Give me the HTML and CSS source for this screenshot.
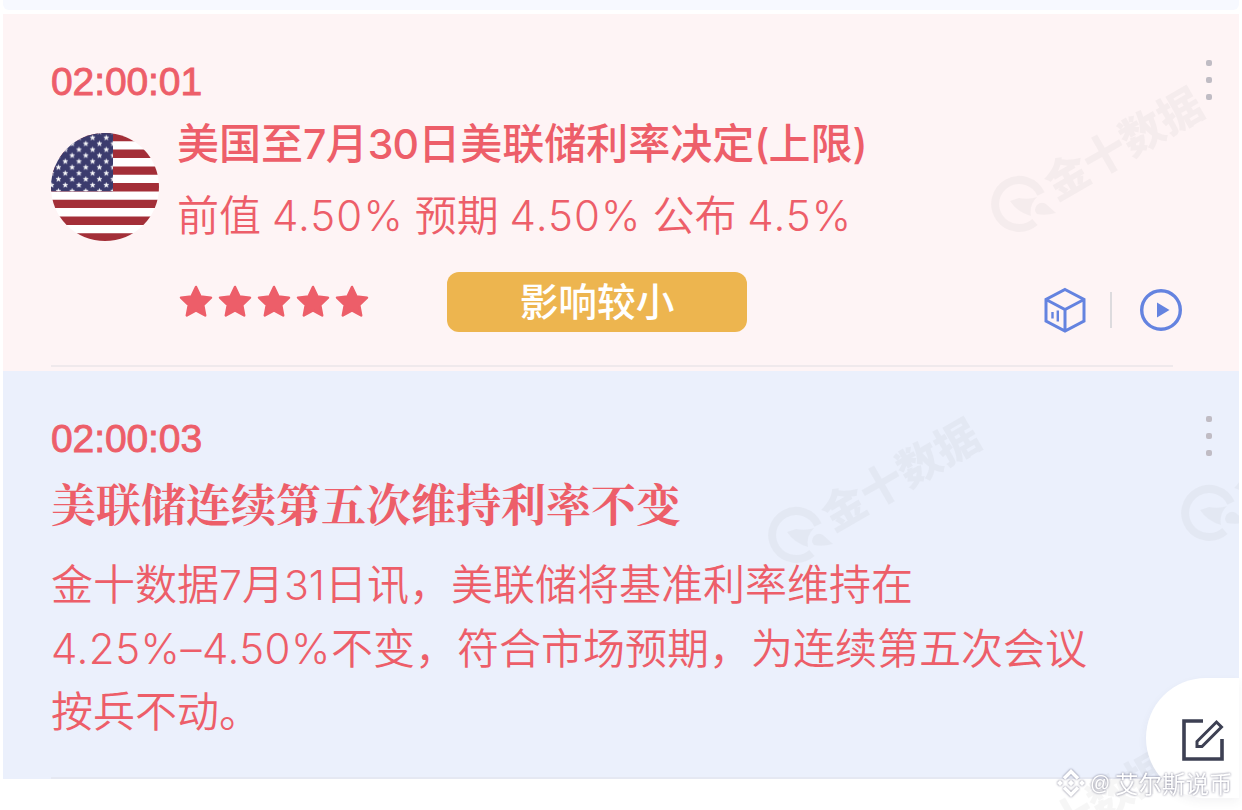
FILE: index.html
```html
<!DOCTYPE html>
<html lang="zh-CN">
<head>
    <meta charset="UTF-8">
    <meta name="viewport" content="width=device-width, initial-scale=1.0">
    <title>快讯</title>
    <link rel="stylesheet" href="styles.css">
</head>
<body>
    <!-- 公用图形 -->
    <svg class="defs" width="0" height="0">
        <defs>
            <symbol id="star" viewBox="-18 -18 36 36">
                <path d="M0-15 4.5-5.4 15-4.3 7.2 3.1 9.2 13.5 0 8.4-9.2 13.5-7.2 3.1-15-4.3-4.5-5.4Z" fill="currentColor" stroke="currentColor" stroke-width="2.5" stroke-linejoin="round"/>
            </symbol>
            <symbol id="brand" viewBox="0 0 250 180" overflow="visible">
                <path d="M58 131A24 24 0 1 0 52 159" fill="none" stroke="currentColor" stroke-width="8"/>
                <path d="M27 138 36 135Q46 137 54 134Q46 142 48 153Q34 149 27 138Z" fill="currentColor"/>
                <path d="M54 142Q58 138 63 141L73 150Q62 153 54 151Q50 147 54 142Z" fill="currentColor"/>
                <text class="brand-text" transform="translate(73 138) rotate(-30)">金十数据</text>
            </symbol>
        </defs>
    </svg>

    <div class="feed">
        <div class="prev-item"></div>

        <div class="item item-data">
            <svg class="brand brand-1"><use href="#brand"/></svg>
            <div class="time">02:00:01</div>
            <div class="more"><i></i><i></i><i></i></div>
            <div class="data-row">
                <svg class="flag" viewBox="0 0 108 108">
                    <defs>
                        <clipPath id="round"><circle cx="54" cy="54" r="54"/></clipPath>
                        <pattern id="stars" x="10.9" y="1.7" width="13.67" height="11.84" patternUnits="userSpaceOnUse">
                            <path id="s" d="M3.4.5 4.1 2.2 5.9 2.3 4.5 3.5 5 5.3 3.4 4.3 1.8 5.3 2.3 3.5.9 2.3 2.7 2.2Z" fill="#fff" stroke="#fff" stroke-width=".4"/>
                            <use href="#s" x="6.83" y="5.92"/>
                        </pattern>
                    </defs>
                    <g clip-path="url(#round)">
                        <rect width="108" height="108" fill="#fff"/>
                        <path d="M0 4.15H108M0 20.8H108M0 37.6H108M0 54.2H108M0 70.9H108M0 87.7H108M0 104.5H108" stroke="#a32f38" stroke-width="8.4"/>
                        <rect width="62" height="58.3" fill="#3b3b6d"/>
                        <rect width="62" height="58.3" fill="url(#stars)"/>
                    </g>
                </svg>
                <div class="data-info">
                    <div class="data-title">美国至<span>7</span>月<span>30</span>日美联储利率决定<span>(</span>上限<span>)</span></div>
                    <div class="data-values">前值 <span>4.50%</span> 预期 <span>4.50%</span> 公布 <span>4.5%</span></div>
                </div>
            </div>
            <div class="data-foot">
                <div class="stars">
                    <svg><use href="#star"/></svg>
                    <svg><use href="#star"/></svg>
                    <svg><use href="#star"/></svg>
                    <svg><use href="#star"/></svg>
                    <svg><use href="#star"/></svg>
                </div>
                <div class="effect">影响较小</div>
                <div class="tools">
                    <svg width="44" height="46" viewBox="0 0 44 46" fill="none" stroke="#6483e0" stroke-width="3">
                        <path d="M22 2.5 41 12.5V34L22 44 3 34V12.5ZM3 12.5 22 22.5 41 12.5M22 22.5V44"/>
                        <path d="M9.5 25V31.500M14.8 23.500V34.500" stroke-width="2.4"/>
                    </svg>
                    <span class="split"></span>
                    <svg width="44" height="44" viewBox="0 0 44 44">
                        <circle cx="22" cy="22" r="19.3" fill="none" stroke="#6483e0" stroke-width="3.4"/>
                        <path d="M18 14.5 30.5 22 18 29.5Z" fill="#6483e0"/>
                    </svg>
                </div>
            </div>
        </div>

        <div class="item item-news">
            <svg class="brand brand-2"><use href="#brand"/></svg>
            <svg class="brand brand-3"><use href="#brand"/></svg>
            <div class="time">02:00:03</div>
            <div class="more"><i></i><i></i><i></i></div>
            <h2 class="news-title">美联储连续第五次维持利率不变</h2>
            <p class="news-text">金十数据<span>7</span>月<span>31</span>日讯，美联储将基准利率维持在<br><span class="range">4.25%–4.50%</span>不变，符合市场预期，为连续第五次会议<br>按兵不动。</p>
        </div>
        <svg class="brand brand-4"><use href="#brand"/></svg>
    </div>

    <div class="edit">
        <svg width="46" height="46" viewBox="0 0 46 46" fill="none" stroke="#3d4053" stroke-width="3.6">
            <path d="M23 4H4V42H42V22"/>
            <path d="M17 24.5 36.5 5 41.5 10 22 29.5H17Z" stroke-width="3"/>
        </svg>
    </div>

    <div class="source">
        <svg width="28" height="28" viewBox="0 0 28 28">
            <path d="M7 9.500 14 2.500 21 9.500M7 18.500 14 25.500 21 18.500" fill="none" stroke="#fff" stroke-width="3.6"/>
            <path d="M14 10.800 17.200 14 14 17.200 10.800 14ZM3 11 6 14 3 17 0 14ZM25 11 28 14 25 17 22 14Z" fill="#fff"/>
        </svg>
        <span class="at">@</span><span>艾尔斯说币</span>
    </div>
</body>
</html>
```

FILE: styles.css
```css
body {
    position: relative;
    width: 1242px;
    height: 810px;
    margin: 0;
    overflow: hidden;
    background-color: #fff;
    color: #ed5e69;
    font-family: "Noto Sans CJK SC", sans-serif;
}
.defs {
    position: absolute;
}
.feed {
    position: relative;
    height: 810px;
    margin: 0 3px;
    overflow: hidden;
}
.prev-item {
    height: 10px;
    margin-bottom: 4px;
    background-color: #f7f9ff;
    border-radius: 0 0 6px 6px;
}
.item {
    position: relative;
    box-sizing: border-box;
    padding: 0 48px;
    overflow: hidden;
}
.item-data {
    height: 357px;
    padding-top: 46px;
    background-color: #fef4f5;
}
.item-data::after {
    content: "";
    position: absolute;
    left: 48px;
    right: 66px;
    bottom: 4px;
    height: 2px;
    background-color: #efe9ec;
}
.item-news {
    height: 408px;
    padding-top: 46px;
    background-color: #ebf0fc;
}
.item-news::after {
    content: "";
    position: absolute;
    left: 48px;
    right: 66px;
    bottom: 0;
    height: 2px;
    background-color: #e5e8f2;
}
.time {
    height: 44px;
    font: 39px/44px "Liberation Sans", sans-serif;
    letter-spacing: -0.1px;
    -webkit-text-stroke: 0.9px #ed5e69;
}
.more {
    position: absolute;
    top: 46px;
    right: 27px;
    display: flex;
    flex-direction: column;
    gap: 11px;
}
.more i {
    width: 6px;
    height: 6px;
    border-radius: 2px;
    background-color: #c0bcc4;
}
.item-news .more {
    top: 45px;
}

/* 数据 */
.data-row {
    display: flex;
    gap: 18px;
    margin-top: 6px;
}
.flag {
    width: 108px;
    height: 108px;
    margin-top: 23px;
}
.data-info {
    white-space: nowrap;
}
.data-title {
    height: 62px;
    font-size: 42px;
    line-height: 62px;
    font-weight: 500;
}
.data-values {
    height: 62px;
    margin-top: 10px;
    font-size: 42px;
    line-height: 62px;
    font-weight: 350;
    word-spacing: 1.5px;
}
.data-title span,
.data-values span,
.news-text span {
    font-family: Inter, sans-serif;
    font-size: 41px;
    line-height: 1;
}
.data-title span {
    letter-spacing: -0.8px;
}
.data-values span {
    font-size: 42px;
    letter-spacing: 1.1px;
}
.news-text .range {
    font-size: 42px;
    letter-spacing: 0.5px;
}
.data-foot {
    display: flex;
    align-items: center;
    height: 60px;
    margin-top: 28px;
}
.stars {
    display: flex;
    gap: 3px;
    width: 269px;
    margin-left: 127px;
}
.stars svg {
    width: 36px;
    height: 36px;
}
.effect {
    width: 300px;
    height: 60px;
    border-radius: 12px;
    background-color: #edb54f;
    color: #fff;
    font-size: 38.7px;
    line-height: 55px;
    font-weight: 500;
    text-align: center;
}
.tools {
    display: flex;
    align-items: center;
    gap: 23px;
    margin: 15px 0 0 296px;
}
.split {
    width: 2px;
    height: 36px;
    margin-right: 4px;
    background-color: #dddbde;
}

/* 快讯 */
.news-title {
    height: 66px;
    margin: 9px 0 0;
    font-family: "Noto Serif CJK SC", "Noto Sans CJK SC", serif;
    font-size: 45px;
    line-height: 66px;
    font-weight: 700;
    white-space: nowrap;
}
.news-text {
    margin: 14px 0 0;
    font-size: 42px;
    line-height: 63.5px;
    font-weight: 350;
    white-space: nowrap;
}

/* 背景水印 */
.brand {
    position: absolute;
    width: 250px;
    height: 180px;
    color: #777;
    opacity: 0.06;
    overflow: visible;
}
.brand-text {
    fill: currentColor;
    font-size: 43.5px;
    font-weight: 900;
}
.brand-1 {
    left: 980px;
    top: 49px;
}
.brand-2 {
    left: 757px;
    top: 23px;
}
.brand-3 {
    left: 1170px;
    top: 1px;
}
.brand-4 {
    left: 948px;
    top: 726px;
}

.edit {
    position: absolute;
    left: 1146px;
    top: 678px;
    display: flex;
    align-items: center;
    box-sizing: border-box;
    width: 93px;
    height: 120px;
    padding: 3px 0 0 34px;
    border-radius: 60px 0 0 60px;
    background-color: #fff;
    box-shadow: 0 4px 10px rgba(60, 60, 80, 0.06);
}
.source {
    position: absolute;
    left: 1057px;
    top: 765px;
    display: flex;
    align-items: center;
    gap: 5px;
    height: 36px;
    color: #fff;
    font-size: 23.5px;
    line-height: 34px;
    white-space: nowrap;
    filter: drop-shadow(0 0 1px rgba(70, 70, 100, 0.75));
}
.source .at {
    width: 20px;
    font-family: "Liberation Sans", sans-serif;
    font-size: 20px;
}
```
